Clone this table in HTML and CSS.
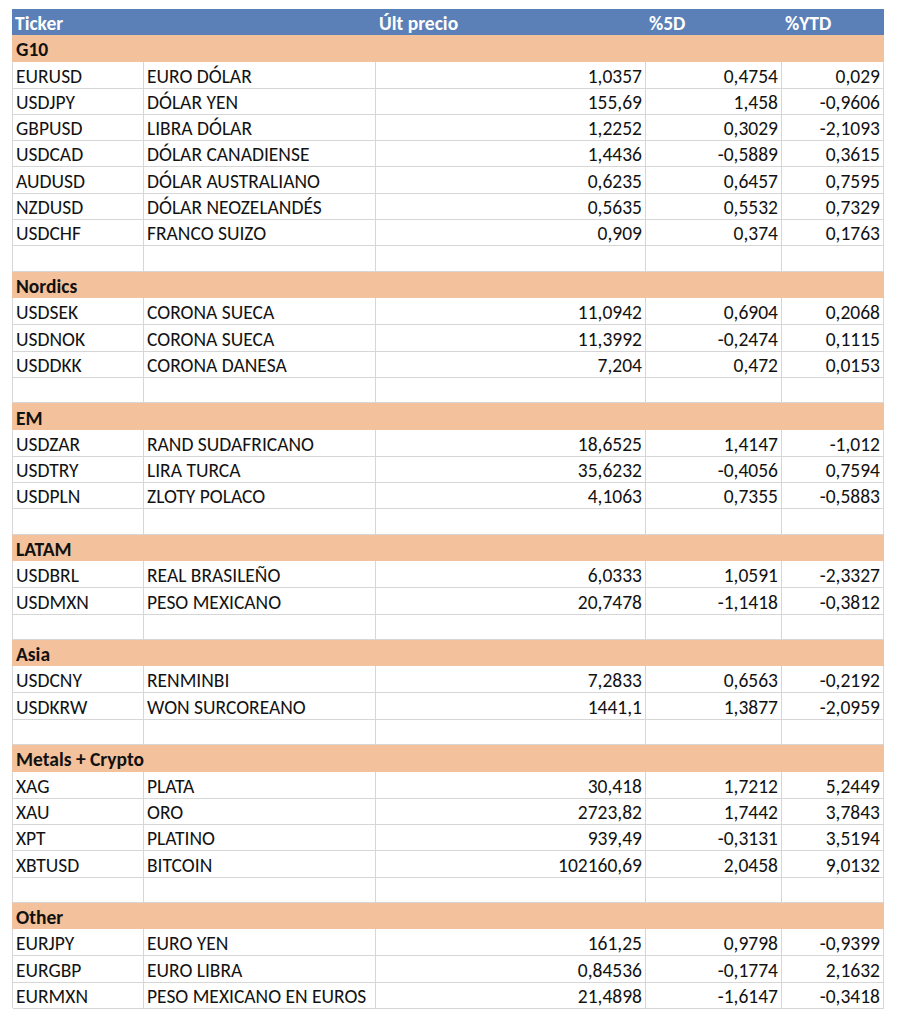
FILE: index.html
```html
<!DOCTYPE html>
<html lang="es">
<head>
<meta charset="utf-8">
<title>Divisas</title>
<link rel="stylesheet" href="styles.css">
</head>
<body>
<div class="page">
  <div class="sheet">
    <div class="row head"><div class="c">Ticker</div><div class="c"></div><div class="c">Últ precio</div><div class="c">%5D</div><div class="c">%YTD</div></div>

    <div class="row group"><div class="g">G10</div></div>
    <div class="row"><div class="c">EURUSD</div><div class="c">EURO DÓLAR</div><div class="c n">1,0357</div><div class="c n">0,4754</div><div class="c n">0,029</div></div>
    <div class="row"><div class="c">USDJPY</div><div class="c">DÓLAR YEN</div><div class="c n">155,69</div><div class="c n">1,458</div><div class="c n">-0,9606</div></div>
    <div class="row"><div class="c">GBPUSD</div><div class="c">LIBRA DÓLAR</div><div class="c n">1,2252</div><div class="c n">0,3029</div><div class="c n">-2,1093</div></div>
    <div class="row"><div class="c">USDCAD</div><div class="c">DÓLAR CANADIENSE</div><div class="c n">1,4436</div><div class="c n">-0,5889</div><div class="c n">0,3615</div></div>
    <div class="row"><div class="c">AUDUSD</div><div class="c">DÓLAR AUSTRALIANO</div><div class="c n">0,6235</div><div class="c n">0,6457</div><div class="c n">0,7595</div></div>
    <div class="row"><div class="c">NZDUSD</div><div class="c">DÓLAR NEOZELANDÉS</div><div class="c n">0,5635</div><div class="c n">0,5532</div><div class="c n">0,7329</div></div>
    <div class="row"><div class="c">USDCHF</div><div class="c">FRANCO SUIZO</div><div class="c n">0,909</div><div class="c n">0,374</div><div class="c n">0,1763</div></div>
    <div class="row"><div class="c"></div><div class="c"></div><div class="c"></div><div class="c"></div><div class="c"></div></div>

    <div class="row group"><div class="g">Nordics</div></div>
    <div class="row"><div class="c">USDSEK</div><div class="c">CORONA SUECA</div><div class="c n">11,0942</div><div class="c n">0,6904</div><div class="c n">0,2068</div></div>
    <div class="row"><div class="c">USDNOK</div><div class="c">CORONA SUECA</div><div class="c n">11,3992</div><div class="c n">-0,2474</div><div class="c n">0,1115</div></div>
    <div class="row"><div class="c">USDDKK</div><div class="c">CORONA DANESA</div><div class="c n">7,204</div><div class="c n">0,472</div><div class="c n">0,0153</div></div>
    <div class="row"><div class="c"></div><div class="c"></div><div class="c"></div><div class="c"></div><div class="c"></div></div>

    <div class="row group"><div class="g">EM</div></div>
    <div class="row"><div class="c">USDZAR</div><div class="c">RAND SUDAFRICANO</div><div class="c n">18,6525</div><div class="c n">1,4147</div><div class="c n">-1,012</div></div>
    <div class="row"><div class="c">USDTRY</div><div class="c">LIRA TURCA</div><div class="c n">35,6232</div><div class="c n">-0,4056</div><div class="c n">0,7594</div></div>
    <div class="row"><div class="c">USDPLN</div><div class="c">ZLOTY POLACO</div><div class="c n">4,1063</div><div class="c n">0,7355</div><div class="c n">-0,5883</div></div>
    <div class="row"><div class="c"></div><div class="c"></div><div class="c"></div><div class="c"></div><div class="c"></div></div>

    <div class="row group"><div class="g">LATAM</div></div>
    <div class="row"><div class="c">USDBRL</div><div class="c">REAL BRASILEÑO</div><div class="c n">6,0333</div><div class="c n">1,0591</div><div class="c n">-2,3327</div></div>
    <div class="row"><div class="c">USDMXN</div><div class="c">PESO MEXICANO</div><div class="c n">20,7478</div><div class="c n">-1,1418</div><div class="c n">-0,3812</div></div>
    <div class="row"><div class="c"></div><div class="c"></div><div class="c"></div><div class="c"></div><div class="c"></div></div>

    <div class="row group"><div class="g">Asia</div></div>
    <div class="row"><div class="c">USDCNY</div><div class="c">RENMINBI</div><div class="c n">7,2833</div><div class="c n">0,6563</div><div class="c n">-0,2192</div></div>
    <div class="row"><div class="c">USDKRW</div><div class="c">WON SURCOREANO</div><div class="c n">1441,1</div><div class="c n">1,3877</div><div class="c n">-2,0959</div></div>
    <div class="row"><div class="c"></div><div class="c"></div><div class="c"></div><div class="c"></div><div class="c"></div></div>

    <div class="row group"><div class="g">Metals + Crypto</div></div>
    <div class="row"><div class="c">XAG</div><div class="c">PLATA</div><div class="c n">30,418</div><div class="c n">1,7212</div><div class="c n">5,2449</div></div>
    <div class="row"><div class="c">XAU</div><div class="c">ORO</div><div class="c n">2723,82</div><div class="c n">1,7442</div><div class="c n">3,7843</div></div>
    <div class="row"><div class="c">XPT</div><div class="c">PLATINO</div><div class="c n">939,49</div><div class="c n">-0,3131</div><div class="c n">3,5194</div></div>
    <div class="row"><div class="c">XBTUSD</div><div class="c">BITCOIN</div><div class="c n">102160,69</div><div class="c n">2,0458</div><div class="c n">9,0132</div></div>
    <div class="row"><div class="c"></div><div class="c"></div><div class="c"></div><div class="c"></div><div class="c"></div></div>

    <div class="row group"><div class="g">Other</div></div>
    <div class="row"><div class="c">EURJPY</div><div class="c">EURO YEN</div><div class="c n">161,25</div><div class="c n">0,9798</div><div class="c n">-0,9399</div></div>
    <div class="row"><div class="c">EURGBP</div><div class="c">EURO LIBRA</div><div class="c n">0,84536</div><div class="c n">-0,1774</div><div class="c n">2,1632</div></div>
    <div class="row"><div class="c">EURMXN</div><div class="c">PESO MEXICANO EN EUROS</div><div class="c n">21,4898</div><div class="c n">-1,6147</div><div class="c n">-0,3418</div></div>
  </div>
</div>
</body>
</html>
```

FILE: styles.css
```css
html, body {
  margin: 0;
  padding: 0;
  background: #ffffff;
}

.page {
  padding: 9px 0 0 12px;
  min-height: 1024px;
  box-sizing: border-box;
  font-family: Carlito, Lato, "Open Sans", sans-serif;
  font-size: 19.5px;
  color: #121212;
}

.sheet {
  width: 872px;
  border-left: 1px solid #d6d6d6;
  box-sizing: border-box;
}

.row {
  display: grid;
  grid-template-columns: 131px 232px 270px 136px 102px;
  height: 26.3px;
  box-sizing: border-box;
}

.c {
  border-right: 1px solid #d6d6d6;
  border-bottom: 1px solid #d6d6d6;
  padding: 2px 3px 0;
  display: flex;
  align-items: center;
  white-space: nowrap;
  min-width: 0;
}

.n {
  justify-content: flex-end;
}

.head {
  background: #5b7fb7;
  margin-left: -1px;
  grid-template-columns: 132px 232px 270px 136px 102px;
}

.head .c {
  border: none;
  color: #ffffff;
  font-weight: 700;
}

.group {
  display: flex;
  align-items: center;
  background: #f3c29c;
  margin-left: -1px;
}

.g {
  padding: 2px 4px 0;
  font-weight: 700;
  color: #111111;
}
```
